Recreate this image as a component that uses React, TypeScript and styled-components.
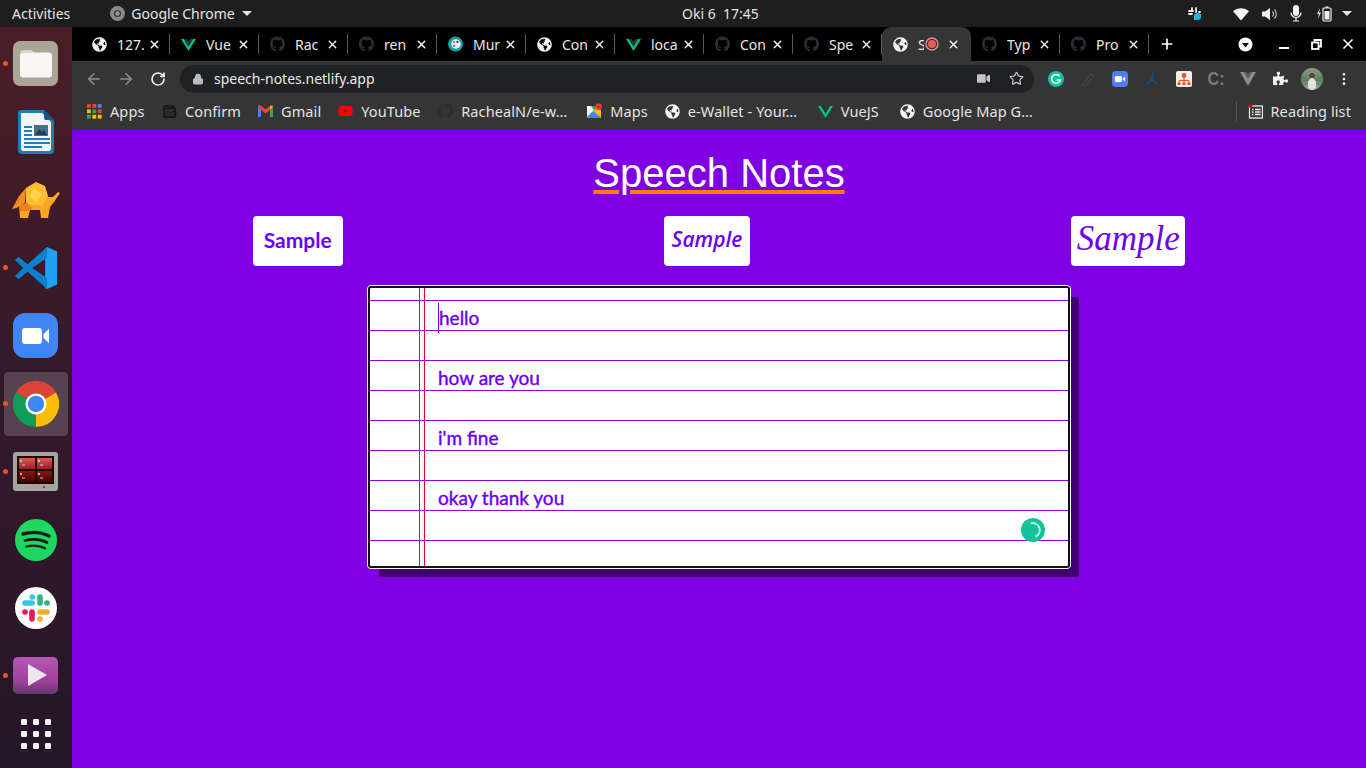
import React from 'react';
import styled, { createGlobalStyle } from 'styled-components';
import { FaGithub, FaGlobeAmericas, FaPuzzlePiece, FaVideo, FaYoutube } from 'react-icons/fa';
import { ArrowLeft, ArrowRight, RotateCw, Lock, Star, X, Plus, EllipsisVertical, Wallet } from 'lucide-react';

const uiFont = '"Noto Sans", "Open Sans", sans-serif';
const purple = '#7f00e2';
const ink = '#6a00f4';
const ruleLine = '#8a00f2';

const GlobalStyle = createGlobalStyle`
  html, body {
    margin: 0;
    padding: 0;
    height: 100%;
    overflow: hidden;
    background: #1d1d1d;
  }
  * { box-sizing: border-box; }
`;

const Screen = styled.div`
  width: 1366px;
  height: 768px;
  display: flex;
  flex-direction: column;
  overflow: hidden;
  font-family: ${uiFont};
`;

const TopBar = styled.div`
  height: 27px;
  flex: none;
  display: flex;
  align-items: center;
  background: #1e1e1e;
  color: #e4e4e4;
  font-size: 14px;
`;

const TopLeft = styled.div`
  width: 682px;
  flex: none;
  display: flex;
  align-items: center;
  padding-left: 12px;
`;

const AppName = styled.div`
  margin-left: 40px;
  display: flex;
  align-items: center;
  gap: 6px;
`;

const Caret = styled.span`
  width: 0;
  height: 0;
  border-left: 5px solid transparent;
  border-right: 5px solid transparent;
  border-top: 5px solid #e4e4e4;
  margin-left: 1px;
`;

const Clock = styled.div`
  white-space: pre;
`;

const Tray = styled.div`
  margin-left: auto;
  display: flex;
  align-items: center;
  color: #eee;
  padding-right: 8px;
`;

const TrayCell = styled.span<{ $w: number }>`
  width: ${({ $w }) => $w}px;
  display: flex;
  justify-content: center;
`;

const Body = styled.div`
  flex: 1;
  display: flex;
  min-height: 0;
`;

const Dock = styled.div`
  width: 72px;
  flex: none;
  display: flex;
  flex-direction: column;
  align-items: center;
  padding-top: 5px;
  background: linear-gradient(180deg, #4a1d26 0%, #351a2a 45%, #241628 100%);
`;

const DockItem = styled.div<{ $active?: boolean; $short?: boolean }>`
  position: relative;
  width: 64px;
  height: ${({ $short }) => ($short ? '44px' : '64px')};
  flex: none;
  margin-bottom: 4px;
  display: flex;
  align-items: center;
  justify-content: center;
  border-radius: 4px;
  background: ${({ $active }) => ($active ? 'rgba(255,255,255,0.18)' : 'transparent')};
`;

const RunDot = styled.span`
  position: absolute;
  left: -1px;
  top: 29px;
  width: 5px;
  height: 5px;
  border-radius: 50%;
  background: #e95420;
`;

const Browser = styled.div`
  flex: 1;
  display: flex;
  flex-direction: column;
  min-width: 0;
`;

const TabStrip = styled.div`
  height: 34px;
  flex: none;
  display: flex;
  align-items: center;
  background: #000;
  padding-left: 9px;
  color: #eee;
`;

const Tab = styled.div<{ $active?: boolean }>`
  position: relative;
  width: 89px;
  height: 34px;
  flex: none;
  display: flex;
  align-items: center;
  padding-left: 11px;
  border-radius: ${({ $active }) => ($active ? '9px 9px 0 0' : '0')};
  background: ${({ $active }) => ($active ? '#353535' : 'transparent')};

  &::after {
    content: '';
    display: ${({ $active }) => ($active ? 'none' : 'block')};
    position: absolute;
    right: 0;
    top: 7px;
    height: 20px;
    width: 1px;
    background: #5a5a5a;
  }
`;

const TabIcon = styled.span<{ $gap?: number }>`
  width: 15px;
  height: 15px;
  flex: none;
  margin-left: ${({ $gap }) => $gap ?? 0}px;
  display: flex;
  align-items: center;
  justify-content: center;
`;

const TabTitle = styled.span<{ $w?: number }>`
  width: ${({ $w }) => $w ?? 28}px;
  margin-left: 10px;
  overflow: hidden;
  white-space: nowrap;
  font-size: 14px;
  color: #e8e8e8;
`;

const TabClose = styled.span<{ $gap?: number }>`
  margin-left: ${({ $gap }) => $gap ?? 3}px;
  display: flex;
  color: #fff;
`;

const NewTab = styled.span`
  margin-left: 10px;
  display: flex;
  color: #fff;
`;

const WindowControls = styled.div`
  margin-left: auto;
  display: flex;
  align-items: center;
  color: #fff;
  padding-right: 2px;
`;

const WinButton = styled.span<{ $first?: boolean }>`
  width: ${({ $first }) => ($first ? '46px' : '32px')};
  display: flex;
  justify-content: center;
`;

const MinimizeBar = styled.span`
  width: 10px;
  height: 2px;
  margin-top: 8px;
  background: #fff;
`;

const Toolbar = styled.div`
  height: 35px;
  flex: none;
  display: flex;
  align-items: center;
  background: #353535;
  padding-left: 6px;
`;

const NavButton = styled.span<{ $dim?: boolean }>`
  width: 32px;
  display: flex;
  justify-content: center;
  color: ${({ $dim }) => ($dim ? '#8f8f8f' : '#f0f0f0')};
`;

const Omnibox = styled.div`
  width: 854px;
  height: 28px;
  margin-left: 6px;
  margin-right: 6px;
  flex: none;
  display: flex;
  align-items: center;
  padding-left: 12px;
  padding-right: 10px;
  border-radius: 14px;
  background: #202124;
  color: #e8eaed;
  font-size: 14px;
`;

const Url = styled.span`
  margin-left: 10px;
`;

const OmniEnd = styled.div`
  margin-left: auto;
  display: flex;
  align-items: center;
  gap: 19px;
  color: #c4c4c4;
`;

const ExtSlot = styled.span`
  width: 32px;
  height: 32px;
  flex: none;
  display: flex;
  align-items: center;
  justify-content: center;
`;

const CmdText = styled.span`
  font-family: "Liberation Sans", sans-serif;
  font-weight: 700;
  font-size: 19px;
  color: #7d7d7d;
  display: inline-block;
  transform: scaleX(0.85);
`;

const Avatar = styled.span`
  width: 22px;
  height: 22px;
  border-radius: 50%;
  background: radial-gradient(ellipse at 50% 75%, #e2e2e2 0 26%, transparent 28%),
    radial-gradient(circle at 50% 35%, #5c4a42 0 14%, transparent 16%),
    linear-gradient(180deg, #8c9c86 0%, #5f7f5e 55%, #9aa59a 100%);
`;

const Bookmarks = styled.div`
  height: 34px;
  flex: none;
  display: flex;
  align-items: center;
  gap: 17px;
  background: #353535;
  padding-left: 15px;
  padding-bottom: 4px;
  color: #e4e4e4;
  font-size: 14.5px;
  letter-spacing: 0.1px;
`;

const Bookmark = styled.div`
  display: flex;
  align-items: center;
  gap: 8px;
  white-space: nowrap;
`;

const BookmarkIcon = styled.span`
  width: 15px;
  height: 15px;
  flex: none;
  display: flex;
  align-items: center;
  justify-content: center;
`;

const BookmarkLabel = styled.span<{ $w: number }>`
  min-width: ${({ $w }) => $w}px;
`;

const ReadingList = styled.div`
  margin-left: auto;
  padding-left: 11px;
  padding-right: 15px;
  border-left: 1px solid #555;
  display: flex;
  align-items: center;
  gap: 8px;
  white-space: nowrap;
`;

const Page = styled.main`
  flex: 1;
  min-height: 0;
  display: flex;
  flex-direction: column;
  align-items: center;
  background: ${purple};
`;

const Heading = styled.h1`
  margin: 17px 0 0;
  height: 52px;
  font-family: "Liberation Sans", Arial, sans-serif;
  font-size: 40px;
  line-height: 52px;
  font-weight: 400;
  color: #fff;
  text-decoration: underline;
  text-decoration-color: #fb7c00;
  text-decoration-thickness: 4px;
  text-underline-offset: 3px;
`;

const SampleRow = styled.div`
  align-self: stretch;
  margin-top: 17px;
  padding: 0 20px;
  display: flex;
  justify-content: space-around;
`;

const SampleButton = styled.button<{ $w: number; $font: string; $size: number; $italic?: boolean; $weight?: number }>`
  width: ${({ $w }) => $w}px;
  height: 50px;
  padding: 0 0 4px;
  border: none;
  border-radius: 4px;
  background: #fff;
  color: ${ink};
  font-family: ${({ $font }) => $font};
  font-size: ${({ $size }) => $size}px;
  font-style: ${({ $italic }) => ($italic ? 'italic' : 'normal')};
  font-weight: ${({ $weight }) => $weight ?? 400};
`;

const Notebook = styled.section`
  position: relative;
  margin-top: 19px;
  width: 704px;
  height: 284px;
  border: 1px solid #fff;
  border-radius: 4px;
  outline: 2px solid #111;
  outline-offset: -3px;
  box-shadow: 10px 10px 0 -2px #40006e;
  overflow: hidden;
  padding: 2px 0 0 70px;
  background-color: #fff;
  background-image:
    linear-gradient(90deg, transparent 51px, #f0002a 51px, #f0002a 52px, transparent 52px, transparent 56px, #f0002a 56px, #f0002a 57px, transparent 57px),
    repeating-linear-gradient(180deg, transparent 0, transparent 14px, ${ruleLine} 14px, ${ruleLine} 15px, transparent 15px, transparent 30px);
  background-size: 100% 100%, 100% 30px;
`;

const NoteLine = styled.div`
  height: 60px;
  display: flex;
  align-items: center;
  font-family: Lato, sans-serif;
  font-weight: 400;
  font-size: 19px;
  line-height: 30px;
  -webkit-text-stroke: 0.4px ${ink};
  color: ${ink};
`;

const Caretted = styled.span`
  border-left: 1px solid ${ink};
  line-height: 30px;
  height: 30px;
`;

const GrammarlyBadge = styled.span`
  position: absolute;
  right: 25px;
  top: 232px;
  width: 24px;
  height: 24px;
  border-radius: 50%;
  background: #15c39a;
  display: flex;
  align-items: center;
  justify-content: center;
`;

const Globe = ({ size = 15 }: { size?: number }) => <FaGlobeAmericas size={size} color="#f4f4f4" />;
const Hub = () => <FaGithub size={16} color="#2b2f33" />;

const VueMark = ({ size = 15 }: { size?: number }) => (
  <svg width={size} height={size} viewBox="0 0 24 24">
    <path d="M0 3h4.8L12 15.2 19.2 3H24L12 22.5z" fill="#00c08b" />
    <path d="M4.8 3h4.5L12 7.6 14.7 3h4.5L12 15.2z" fill="#243b3a" />
  </svg>
);

const MuralMark = () => (
  <svg width="16" height="16" viewBox="0 0 16 16">
    <circle cx="8" cy="8" r="8" fill="#16a3a0" />
    <circle cx="8.5" cy="8" r="5" fill="#f4f4f4" />
    <circle cx="6.5" cy="6" r="1.2" fill="#e2574c" />
    <circle cx="10" cy="5.8" r="1.2" fill="#263a4a" />
    <circle cx="6.5" cy="10" r="1.2" fill="#2d7dd2" />
  </svg>
);

const RecordMark = () => (
  <svg width="14" height="14" viewBox="0 0 14 14">
    <circle cx="7" cy="7" r="6" fill="none" stroke="#f28b82" strokeWidth="1.4" />
    <circle cx="7" cy="7" r="4" fill="#ea5a4f" />
  </svg>
);

const AppsGrid = () => (
  <svg width="15" height="15" viewBox="0 0 15 15">
    {['#ea4335', '#ea4335', '#4285f4', '#fbbc04', '#34a853', '#ea4335', '#34a853', '#fbbc04', '#fbbc04'].map((c, i) => (
      <rect key={i} x={(i % 3) * 5.4} y={Math.floor(i / 3) * 5.4} width="3.8" height="3.8" fill={c} />
    ))}
  </svg>
);

const GmailMark = () => (
  <svg width="15" height="12" viewBox="0 0 15 12">
    <path d="M0 1.5V12h3V5l-3-3.5z" fill="#4285f4" />
    <path d="M12 12h3V1.5L12 5z" fill="#34a853" />
    <path d="M0 1.5C0 0 1.6-.4 2.6.4L7.5 4.2 12.4.4C13.4-.4 15 0 15 1.5L12 5 7.5 8.4 3 5z" fill="#ea4335" />
    <path d="M12 1 15 1.5 12 5z" fill="#fbbc04" />
  </svg>
);

const MapsMark = () => (
  <svg width="15" height="16" viewBox="0 0 15 16">
    <path d="M0 3h10v12H0z" fill="#34a853" />
    <path d="M0 15 6 8l8 7z" fill="#4285f4" />
    <path d="M0 3h4l3 4-7 7z" fill="#f4f4f4" />
    <path d="M6 8l4-3 4 2v8z" fill="#fbbc04" />
    <circle cx="11.5" cy="3.8" r="3.3" fill="#ea4335" />
    <circle cx="11.5" cy="3.8" r="1.1" fill="#8e1b14" />
  </svg>
);

const ReadingMark = () => (
  <svg width="15" height="15" viewBox="0 0 15 15">
    <rect x="1.5" y="2" width="13" height="12" fill="none" stroke="#eee" strokeWidth="1.3" />
    <path d="M4 5.5h1.5M7 5.5h5.5M4 8h1.5M7 8h5.5M4 10.5h1.5M7 10.5h5.5" stroke="#eee" strokeWidth="1.3" />
    <circle cx="2.5" cy="1.8" r="2" fill="#d50000" />
  </svg>
);

const GrammarlyMark = ({ size, ring }: { size: number; ring?: boolean }) =>
  ring ? (
    <svg width={size} height={size} viewBox="0 0 16 16">
      <path d="M7 2.6a5.6 5.6 0 0 1 3.6 10.4" fill="none" stroke="#d7fff3" strokeWidth="1.5" strokeLinecap="round" />
    </svg>
  ) : (
    <svg width={size} height={size} viewBox="0 0 16 16">
      <circle cx="8" cy="8" r="8" fill="#15c39a" />
      <path d="M11.6 5.2A4.4 4.4 0 1 0 12.3 9H8.7" fill="none" stroke="#fff" strokeWidth="1.5" />
    </svg>
  );

const PenExt = () => (
  <svg width="16" height="16" viewBox="0 0 16 16" fill="none" stroke="#414141" strokeWidth="1.6">
    <path d="M2 14 11 3l3 2-9 10zM9 2l5 4" />
  </svg>
);

const ZoomExt = () => (
  <svg width="16" height="16" viewBox="0 0 16 16">
    <rect width="16" height="16" rx="4" fill="#4f7cf0" />
    <rect x="2.8" y="5" width="7" height="6" rx="1.3" fill="#fff" />
    <path d="M10.6 7.4 13.2 5.4v5.2L10.6 8.6z" fill="#fff" />
  </svg>
);

const BranchExt = () => (
  <svg width="14" height="16" viewBox="0 0 14 16" fill="none" stroke="#1d4f74" strokeWidth="1.7">
    <path d="M8.5 1 7 8 1.5 13.5M7 8l5.5 5.5" />
  </svg>
);

const OrgExt = () => (
  <svg width="16" height="16" viewBox="0 0 16 16">
    <rect width="16" height="16" rx="2" fill="#f4efe9" />
    <circle cx="8" cy="4.5" r="2.4" fill="#e8502a" />
    <path d="M8 6v3M3 12V9.5h10V12M8 9v3" stroke="#e8502a" strokeWidth="1" fill="none" />
    <rect x="1.5" y="11.5" width="3" height="2.5" fill="#e8502a" />
    <rect x="6.5" y="11.5" width="3" height="2.5" fill="#e8502a" />
    <rect x="11.5" y="11.5" width="3" height="2.5" fill="#e8502a" />
  </svg>
);

const VExt = () => (
  <svg width="16" height="14" viewBox="0 0 16 14">
    <path d="M0 0h4.2L8 6.5 11.8 0H16L8 14z" fill="#8d8d8d" />
    <path d="M4.2 0h2.6L8 2l1.2-2h2.6L8 6.5z" fill="#5c5c5c" />
  </svg>
);

const FilesIcon = () => (
  <svg width="46" height="46" viewBox="0 0 46 46">
    <rect width="45" height="45" rx="7" fill="#aba595" />
    <path d="M7 12c0-1.6 1.2-2.8 2.8-2.8h8.6l3.2 2.4H7z" fill="#d9d7d0" />
    <rect x="7" y="11.5" width="32" height="25" rx="3" fill="#f7f6f4" />
  </svg>
);

const WriterIcon = () => (
  <svg width="38" height="46" viewBox="0 0 38 46">
    <path d="M3 1h24l10 10v30a4 4 0 0 1-4 4H5a4 4 0 0 1-4-4V3z" fill="#1d7fb4" />
    <path d="M4 4h21l9 9v27a2 2 0 0 1-2 2H6a2 2 0 0 1-2-2z" fill="#f2f6f8" />
    <path d="M27 1l10 10h-8a2 2 0 0 1-2-2z" fill="#135a84" />
    <path d="M7 17h8v2H7zM7 21h8v2H7zM7 25h8v2H7zM7 29h26v2H7zM7 33h26v2H7zM7 37h18v2H7z" fill="#1d7fb4" />
    <rect x="17" y="16" width="14" height="11" fill="#4a6f8a" />
    <path d="M18 26l4-6 3 3 2-2 3 5z" fill="#2c3e4d" />
  </svg>
);

const ElephantIcon = () => (
  <svg width="48" height="36" viewBox="0 0 48 36">
    <path d="M14 6 24 0l9 4 3 10-3 10-12 1-7-4z" fill="#fcc02e" />
    <path d="M14 6 7 14 0 27l5-1 3-3 5-2z" fill="#f58a1f" />
    <path d="M7 22l1 14h8l2-8h10l1 8h7l2-11 4-5 6-9-2-1-5 5h-6l-4 8z" fill="#f9a825" />
    <path d="M8 23l6-2 7 5-4 3H8z" fill="#ef7f1a" />
    <path d="M22 6l8 6-6 8-6-6z" fill="#ffd54f" />
  </svg>
);

const CodeIcon = () => (
  <svg width="44" height="44" viewBox="0 0 48 48">
    <path d="M36 1 47 6v36l-11 5-2-1V3z" fill="#1fa0f2" />
    <path d="M36 1 15 20 5 12 1 15l9 9-9 9 4 3 10-8 21 19V35L20 24 36 13z" fill="#0e7fca" />
  </svg>
);

const ZoomIcon = () => (
  <svg width="46" height="46" viewBox="0 0 46 46">
    <rect width="45" height="45" rx="12" fill="#3f85f5" />
    <rect x="9" y="15" width="20" height="16" rx="3" fill="#fff" />
    <path d="M30.5 21 36 15.8v14.4L30.5 25z" fill="#fff" />
  </svg>
);

const ChromeIcon = () => (
  <svg width="46" height="46" viewBox="0 0 48 48">
    <path d="M24 24 3.2 12A24 24 0 0 1 44.8 12z" fill="#db4437" />
    <path d="M24 24 44.8 12A24 24 0 0 1 24 48z" fill="#fbbc05" />
    <path d="M24 24 24 48A24 24 0 0 1 3.2 12z" fill="#0f9d58" />
    <circle cx="24" cy="24" r="11" fill="#fff" />
    <circle cx="24" cy="24" r="8.6" fill="#4285f4" />
  </svg>
);

const TerminalIcon = () => (
  <svg width="46" height="40" viewBox="0 0 46 40">
    <defs>
      <linearGradient id="paneTop" x1="0" y1="0" x2="0" y2="1">
        <stop offset="0" stopColor="#e25555" />
        <stop offset="1" stopColor="#9c1f1f" />
      </linearGradient>
      <linearGradient id="paneBottom" x1="0" y1="0" x2="0" y2="1">
        <stop offset="0" stopColor="#8f1414" />
        <stop offset="1" stopColor="#3f0505" />
      </linearGradient>
    </defs>
    <rect width="45" height="39" rx="3" fill="#a5a5a0" />
    <rect x="4" y="4" width="37" height="28" fill="#200505" />
    <rect x="6" y="6" width="16" height="11" fill="url(#paneTop)" />
    <rect x="24" y="6" width="15" height="11" fill="url(#paneTop)" />
    <rect x="6" y="19" width="16" height="11" fill="url(#paneBottom)" />
    <rect x="24" y="19" width="15" height="11" fill="url(#paneBottom)" />
    <path d="M7 8l2 1-2 1M25 8l2 1-2 1M7 21l2 1-2 1M25 21l2 1-2 1M9 13h3M27 13h3M9 26h3M27 26h3" stroke="#f4f4f4" strokeWidth="0.8" fill="none" />
    <rect x="30" y="34" width="2" height="2" fill="#e02020" />
  </svg>
);

const SpotifyIcon = () => (
  <svg width="42" height="42" viewBox="0 0 42 42">
    <circle cx="21" cy="21" r="21" fill="#1ed760" />
    <g fill="none" stroke="#1b1b1b" strokeLinecap="round">
      <path d="M8 15c9-2.6 18-2 26 2" strokeWidth="3.4" />
      <path d="M10 21.5c8-2 15.5-1.4 22 2" strokeWidth="2.8" />
      <path d="M11.5 27.5c6.6-1.6 13-1.2 18.5 1.8" strokeWidth="2.3" />
    </g>
  </svg>
);

const SlackIcon = () => (
  <svg width="42" height="42" viewBox="0 0 42 42">
    <circle cx="21" cy="21" r="21" fill="#fff" />
    <g strokeLinecap="round" strokeWidth="5.6" fill="none">
      <path d="M10 16h7" stroke="#36c5f0" />
      <path d="M17.2 10h.1" stroke="#36c5f0" />
      <path d="M25 10v6" stroke="#2eb67d" />
      <path d="M32 16h.1" stroke="#2eb67d" />
      <path d="M25 25h7" stroke="#ecb22e" />
      <path d="M25 32h.1" stroke="#ecb22e" />
      <path d="M17 25v7" stroke="#e01e5a" />
      <path d="M10 25h.1" stroke="#e01e5a" />
    </g>
  </svg>
);

const VideoIcon = () => (
  <svg width="46" height="38" viewBox="0 0 46 38">
    <defs>
      <linearGradient id="videoFill" x1="0" y1="0" x2="0" y2="1">
        <stop offset="0" stopColor="#b856b4" />
        <stop offset="0.7" stopColor="#9a3f9a" />
        <stop offset="1" stopColor="#5e3b63" />
      </linearGradient>
    </defs>
    <rect width="45" height="37" rx="5" fill="url(#videoFill)" />
    <path d="M15 7 34 18 15 29z" fill="#f0e4ee" />
  </svg>
);

const AppGridIcon = () => (
  <svg width="32" height="32" viewBox="0 0 32 32">
    {[0, 1, 2, 3, 4, 5, 6, 7, 8].map(i => (
      <rect key={i} x={1 + (i % 3) * 12} y={1 + Math.floor(i / 3) * 12} width="6" height="6" rx="1.3" fill="#f2f2f2" />
    ))}
  </svg>
);

const SlackTray = () => (
  <svg width="16" height="16" viewBox="0 0 16 16">
    <path d="M2 5h4M2 8h3M5 2v2M9 2v4M12 6h1M8 10v3M11 9h2" stroke="#eee" strokeWidth="1.8" strokeLinecap="round" />
    <circle cx="10.5" cy="10.5" r="3.6" fill="#18b4ea" />
  </svg>
);

const WifiTray = () => (
  <svg width="16" height="14" viewBox="0 0 16 14">
    <path d="M0 4.2C4.4.2 11.6.2 16 4.2L8 13.5z" fill="#f2f2f2" />
  </svg>
);

const SpeakerTray = () => (
  <svg width="16" height="14" viewBox="0 0 16 14">
    <path d="M0 4.5h3L8 1v12L3 9.5H0z" fill="#eee" />
    <path d="M10.5 4.5a3.5 3.5 0 0 1 0 5M12.5 2.5a6.5 6.5 0 0 1 0 9" fill="none" stroke="#bbb" strokeWidth="1.2" />
  </svg>
);

const MicTray = () => (
  <svg width="12" height="17" viewBox="0 0 12 17">
    <rect x="3" y="0" width="6" height="11" rx="3" fill="#eee" />
    <path d="M1 7.5a5 5 0 0 0 10 0M6 12.5V16M3 16h6" fill="none" stroke="#eee" strokeWidth="1.2" />
  </svg>
);

const BatteryTray = () => (
  <svg width="16" height="16" viewBox="0 0 16 16">
    <path d="M4 2 1 8h2l-1 5 3-6.500H3z" fill="#eee" />
    <rect x="7" y="2" width="8" height="13" rx="1" fill="none" stroke="#eee" strokeWidth="1.2" />
    <rect x="9.500" y="0.500" width="3" height="1.500" fill="#eee" />
    <rect x="8.500" y="5" width="5" height="8.500" fill="#eee" />
  </svg>
);

const DropCircle = () => (
  <svg width="15" height="15" viewBox="0 0 15 15">
    <circle cx="7.5" cy="7.5" r="7" fill="#fff" />
    <path d="M4 6h7L7.5 10.5z" fill="#111" />
  </svg>
);

const RestoreMark = () => (
  <svg width="11" height="11" viewBox="0 0 11 11" fill="none" stroke="#fff" strokeWidth="1.8">
    <rect x="1" y="3.5" width="6.5" height="6.5" />
    <path d="M3.5 3V1H10v6.5H8" />
  </svg>
);

const ChromeGlyph = () => (
  <svg width="15" height="15" viewBox="0 0 15 15">
    <circle cx="7.5" cy="7.5" r="7.5" fill="#8a8a8a" />
    <circle cx="7.5" cy="7.5" r="3.6" fill="#3c3c3c" />
    <circle cx="7.5" cy="7.5" r="2.2" fill="#9a9a9a" />
  </svg>
);

const leftTabs: { icon: React.ReactNode; title: string }[] = [
  { icon: <Globe />, title: '127.' },
  { icon: <VueMark />, title: 'Vue' },
  { icon: <Hub />, title: 'Rac' },
  { icon: <Hub />, title: 'ren' },
  { icon: <MuralMark />, title: 'Mur' },
  { icon: <Globe />, title: 'Con' },
  { icon: <VueMark />, title: 'loca' },
  { icon: <Hub />, title: 'Con' },
  { icon: <Hub />, title: 'Spe' },
];

const rightTabs = ['Typ', 'Pro'];

const bookmarks: { icon: React.ReactNode; label: string; w: number }[] = [
  { icon: <AppsGrid />, label: 'Apps', w: 35 },
  { icon: <Wallet size={15} color="#111" fill="#2a2a2a" />, label: 'Confirm', w: 56 },
  { icon: <GmailMark />, label: 'Gmail', w: 39 },
  { icon: <FaYoutube size={16} color="#f00" />, label: 'YouTube', w: 60 },
  { icon: <Hub />, label: 'RachealN/e-w…', w: 109 },
  { icon: <MapsMark />, label: 'Maps', w: 37 },
  { icon: <Globe />, label: 'e-Wallet - Your…', w: 113 },
  { icon: <VueMark />, label: 'VueJS', w: 42 },
  { icon: <Globe />, label: 'Google Map G…', w: 110 },
];

const dockApps: { icon: React.ReactNode; running?: boolean; active?: boolean; short?: boolean }[] = [
  { icon: <FilesIcon />, running: true },
  { icon: <WriterIcon /> },
  { icon: <ElephantIcon /> },
  { icon: <CodeIcon />, running: true },
  { icon: <ZoomIcon /> },
  { icon: <ChromeIcon />, running: true, active: true },
  { icon: <TerminalIcon />, running: true },
  { icon: <SpotifyIcon /> },
  { icon: <SlackIcon /> },
  { icon: <VideoIcon />, running: true },
  { icon: <AppGridIcon />, short: true },
];

const extensions: React.ReactNode[] = [
  <GrammarlyMark size={16} />,
  <PenExt />,
  <ZoomExt />,
  <BranchExt />,
  <OrgExt />,
  <CmdText>C:</CmdText>,
  <VExt />,
  <FaPuzzlePiece size={15} color="#f0f0f0" />,
  <Avatar />,
  <EllipsisVertical size={16} color="#f0f0f0" />,
];

const notes = ['hello', 'how are you', "i'm fine", 'okay thank you'];

export default function App() {
  return (
    <Screen>
      <GlobalStyle />
      <TopBar>
        <TopLeft>
          Activities
          <AppName>
            <ChromeGlyph />
            Google Chrome
            <Caret />
          </AppName>
        </TopLeft>
        <Clock>Oki 6  17:45</Clock>
        <Tray>
          <TrayCell $w={50}><SlackTray /></TrayCell>
          <TrayCell $w={42}><WifiTray /></TrayCell>
          <TrayCell $w={16}><SpeakerTray /></TrayCell>
          <TrayCell $w={36}><MicTray /></TrayCell>
          <TrayCell $w={20}><BatteryTray /></TrayCell>
          <TrayCell $w={24}><Caret /></TrayCell>
        </Tray>
      </TopBar>
      <Body>
        <Dock>
          {dockApps.map((app, i) => (
            <DockItem key={i} $active={app.active} $short={app.short}>
              {app.running && <RunDot />}
              {app.icon}
            </DockItem>
          ))}
        </Dock>
        <Browser>
          <TabStrip>
            {leftTabs.map((tab, i) => (
              <Tab key={i}>
                <TabIcon>{tab.icon}</TabIcon>
                <TabTitle>{tab.title}</TabTitle>
                <TabClose><X size={13} strokeWidth={2.5} /></TabClose>
              </Tab>
            ))}
            <Tab $active>
              <TabIcon><Globe /></TabIcon>
              <TabTitle $w={6}>S</TabTitle>
              <TabIcon><RecordMark /></TabIcon>
              <TabClose $gap={8}><X size={13} strokeWidth={2.5} /></TabClose>
            </Tab>
            {rightTabs.map(title => (
              <Tab key={title}>
                <TabIcon><Hub /></TabIcon>
                <TabTitle>{title}</TabTitle>
                <TabClose><X size={13} strokeWidth={2.5} /></TabClose>
              </Tab>
            ))}
            <NewTab><Plus size={16} strokeWidth={2.5} /></NewTab>
            <WindowControls>
              <WinButton $first><DropCircle /></WinButton>
              <WinButton><MinimizeBar /></WinButton>
              <WinButton><RestoreMark /></WinButton>
              <WinButton><X size={16} strokeWidth={2.5} /></WinButton>
            </WindowControls>
          </TabStrip>
          <Toolbar>
            <NavButton $dim><ArrowLeft size={18} /></NavButton>
            <NavButton $dim><ArrowRight size={18} /></NavButton>
            <NavButton><RotateCw size={16} strokeWidth={2.5} /></NavButton>
            <Omnibox>
              <Lock size={12} color="#bbb" fill="#bbb" />
              <Url>speech-notes.netlify.app</Url>
              <OmniEnd>
                <FaVideo size={13} />
                <Star size={15} />
              </OmniEnd>
            </Omnibox>
            {extensions.map((ext, i) => (
              <ExtSlot key={i}>{ext}</ExtSlot>
            ))}
          </Toolbar>
          <Bookmarks>
            {bookmarks.map(mark => (
              <Bookmark key={mark.label}>
                <BookmarkIcon>{mark.icon}</BookmarkIcon>
                <BookmarkLabel $w={mark.w}>{mark.label}</BookmarkLabel>
              </Bookmark>
            ))}
            <ReadingList>
              <ReadingMark />
              Reading list
            </ReadingList>
          </Bookmarks>
          <Page>
            <Heading>Speech Notes</Heading>
            <SampleRow>
              <SampleButton $w={90} $font="Lato, sans-serif" $size={21} $weight={700}>Sample</SampleButton>
              <SampleButton $w={86} $font='"Open Sans", sans-serif' $size={21} $italic $weight={600}>Sample</SampleButton>
              <SampleButton $w={114} $font='"Liberation Serif", serif' $size={35} $italic>Sample</SampleButton>
            </SampleRow>
            <Notebook>
              {notes.map((note, i) => (
                <NoteLine key={note}>
                  {i === 0 ? <Caretted>{note}</Caretted> : note}
                </NoteLine>
              ))}
              <GrammarlyBadge><GrammarlyMark size={20} ring /></GrammarlyBadge>
            </Notebook>
          </Page>
        </Browser>
      </Body>
    </Screen>
  );
}
